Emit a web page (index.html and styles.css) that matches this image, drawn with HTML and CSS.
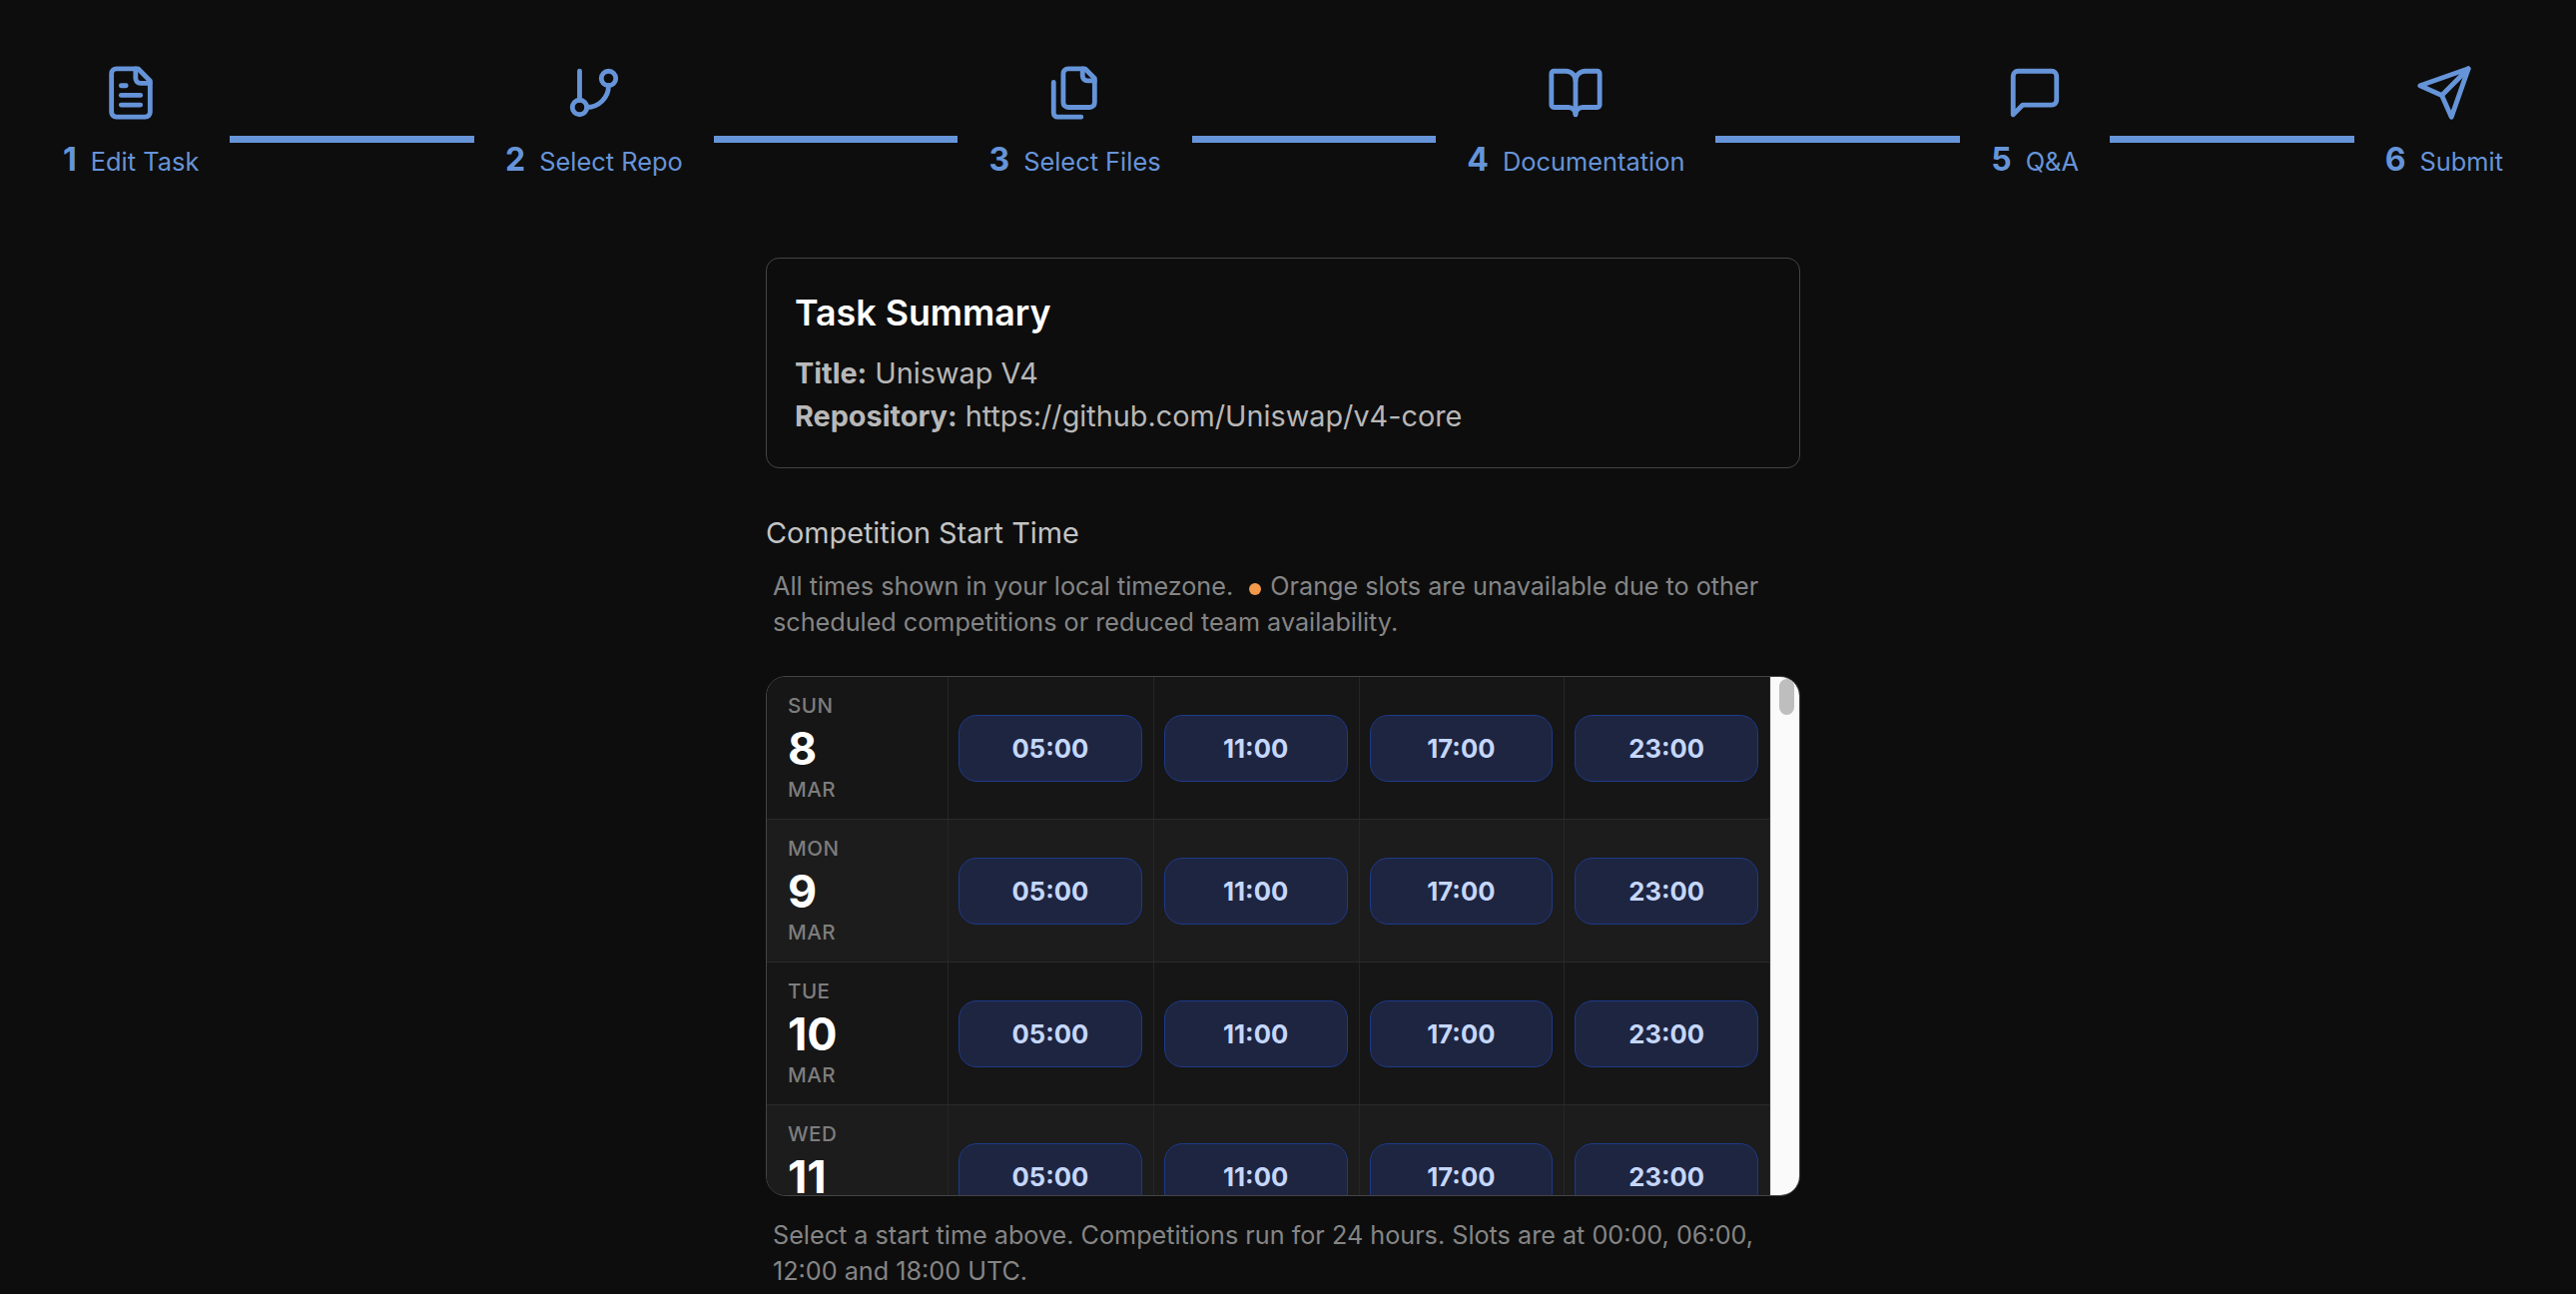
FILE: index.html
```html
<!DOCTYPE html>
<html lang="en">
<head>
  <meta charset="UTF-8">
  <meta name="viewport" content="width=device-width, initial-scale=1.0">
  <title>Task Setup</title>
  <link rel="stylesheet" href="styles.css">
</head>
<body>
  <nav class="stepper">
    <div class="step">
      <svg class="step-icon" viewBox="0 0 24 24"><path d="M15 2H6a2 2 0 0 0-2 2v16a2 2 0 0 0 2 2h12a2 2 0 0 0 2-2V7Z"/><path d="M14 2v4a2 2 0 0 0 2 2h4"/><path d="M10 9H8"/><path d="M16 13H8"/><path d="M16 17H8"/></svg>
      <div class="step-label"><span class="step-num">1</span><span>Edit Task</span></div>
    </div>
    <div class="step-line"></div>
    <div class="step">
      <svg class="step-icon" viewBox="0 0 24 24"><path d="M6 3v12"/><circle cx="18" cy="6" r="3"/><circle cx="6" cy="18" r="3"/><path d="M18 9a9 9 0 0 1-9 9"/></svg>
      <div class="step-label"><span class="step-num">2</span><span>Select Repo</span></div>
    </div>
    <div class="step-line"></div>
    <div class="step">
      <svg class="step-icon" viewBox="0 0 24 24"><path d="M20 7h-3a2 2 0 0 1-2-2V2"/><path d="M9 18a2 2 0 0 1-2-2V4a2 2 0 0 1 2-2h7l4 4v10a2 2 0 0 1-2 2Z"/><path d="M3 7.6v12.8A1.6 1.6 0 0 0 4.6 22h9.8"/></svg>
      <div class="step-label"><span class="step-num">3</span><span>Select Files</span></div>
    </div>
    <div class="step-line"></div>
    <div class="step">
      <svg class="step-icon" viewBox="0 0 24 24"><path d="M12 7v14"/><path d="M3 18a1 1 0 0 1-1-1V4a1 1 0 0 1 1-1h5a4 4 0 0 1 4 4 4 4 0 0 1 4-4h5a1 1 0 0 1 1 1v13a1 1 0 0 1-1 1h-6a3 3 0 0 0-3 3 3 3 0 0 0-3-3z"/></svg>
      <div class="step-label"><span class="step-num">4</span><span>Documentation</span></div>
    </div>
    <div class="step-line"></div>
    <div class="step">
      <svg class="step-icon" viewBox="0 0 24 24"><path d="M21 15a2 2 0 0 1-2 2H7l-4 4V5a2 2 0 0 1 2-2h14a2 2 0 0 1 2 2z"/></svg>
      <div class="step-label"><span class="step-num">5</span><span>Q&amp;A</span></div>
    </div>
    <div class="step-line"></div>
    <div class="step">
      <svg class="step-icon" viewBox="0 0 24 24"><path d="m22 2-7 20-4-9-9-4Z"/><path d="M22 2 11 13"/></svg>
      <div class="step-label"><span class="step-num">6</span><span>Submit</span></div>
    </div>
  </nav>

  <main class="content">
    <section class="summary">
      <h2>Task Summary</h2>
      <p><strong>Title:</strong> Uniswap V4</p>
      <p><strong>Repository:</strong> https://github.com/Uniswap/v4-core</p>
    </section>

    <h3 class="field-title">Competition Start Time</h3>
    <p class="hint hint-top">All times shown in your local timezone. <span class="dot"></span>Orange slots are unavailable due to other scheduled competitions or reduced team availability.</p>

    <div class="calendar">
      <div class="calendar-rows">
        <div class="day-row">
          <div class="day-cell">
            <span class="day-name">SUN</span>
            <span class="day-number">8</span>
            <span class="day-month">MAR</span>
          </div>
          <div class="slot-cell"><button class="slot">05:00</button></div>
          <div class="slot-cell"><button class="slot">11:00</button></div>
          <div class="slot-cell"><button class="slot">17:00</button></div>
          <div class="slot-cell"><button class="slot">23:00</button></div>
        </div>
        <div class="day-row">
          <div class="day-cell">
            <span class="day-name">MON</span>
            <span class="day-number">9</span>
            <span class="day-month">MAR</span>
          </div>
          <div class="slot-cell"><button class="slot">05:00</button></div>
          <div class="slot-cell"><button class="slot">11:00</button></div>
          <div class="slot-cell"><button class="slot">17:00</button></div>
          <div class="slot-cell"><button class="slot">23:00</button></div>
        </div>
        <div class="day-row">
          <div class="day-cell">
            <span class="day-name">TUE</span>
            <span class="day-number">10</span>
            <span class="day-month">MAR</span>
          </div>
          <div class="slot-cell"><button class="slot">05:00</button></div>
          <div class="slot-cell"><button class="slot">11:00</button></div>
          <div class="slot-cell"><button class="slot">17:00</button></div>
          <div class="slot-cell"><button class="slot">23:00</button></div>
        </div>
        <div class="day-row">
          <div class="day-cell">
            <span class="day-name">WED</span>
            <span class="day-number">11</span>
            <span class="day-month">MAR</span>
          </div>
          <div class="slot-cell"><button class="slot">05:00</button></div>
          <div class="slot-cell"><button class="slot">11:00</button></div>
          <div class="slot-cell"><button class="slot">17:00</button></div>
          <div class="slot-cell"><button class="slot">23:00</button></div>
        </div>
      </div>
      <div class="scrollbar"><div class="scrollbar-thumb"></div></div>
    </div>

    <p class="hint hint-bottom">Select a start time above. Competitions run for 24 hours. Slots are at 00:00, 06:00, 12:00 and 18:00 UTC.</p>
  </main>
</body>
</html>
```

FILE: styles.css
```css
* {
  box-sizing: border-box;
}
html, body {
  height: 100%;
  overflow: hidden;
}
body {
  font-family: Inter, "Noto Sans", sans-serif;
  margin: 0;
  padding: 64px 10px 0 0;
  background-color: #0d0d0d;
  color: #b8b8b8;
}
.stepper {
  display: flex;
  align-items: flex-start;
  padding: 0 47px;
  color: #6694d9;
}
.step {
  display: flex;
  flex-direction: column;
  align-items: center;
  padding: 0 16px;
}
.step-icon {
  width: 58px;
  height: 58px;
  fill: none;
  stroke: currentColor;
  stroke-width: 2;
  stroke-linecap: round;
  stroke-linejoin: round;
}
.step-label {
  display: flex;
  align-items: baseline;
  gap: 14px;
  margin-top: 20px;
  font-size: 25.4px;
  line-height: 36px;
  white-space: nowrap;
}
.step-num {
  font-size: 32px;
  font-weight: 700;
}
.step-line {
  flex: 1;
  height: 7px;
  margin: 72px 15px 0;
  background-color: #6694d9;
}
.content {
  width: 1036px;
  margin: 78px auto 0;
}
.summary {
  height: 211px;
  padding: 32px 29px 32px 28px;
  border: 1px solid #444;
  border-radius: 13px;
}
.summary h2 {
  margin: 0 0 17px;
  font-size: 35.8px;
  line-height: 44px;
  font-weight: 600;
  color: #fff;
}
.summary p {
  margin: 0;
  font-size: 28.8px;
  line-height: 43px;
}
.summary strong {
  font-weight: 700;
}
.field-title {
  margin: 47px 0 0;
  font-size: 28.8px;
  line-height: 36px;
  font-weight: 400;
  color: #c4c4c4;
}
.hint {
  margin: 0;
  padding-left: 7px;
  font-size: 25.2px;
  line-height: 36px;
  color: #858585;
}
.hint-top {
  margin-top: 17px;
}
.hint-bottom {
  margin-top: 21px;
}
.dot {
  display: inline-block;
  width: 12px;
  height: 12px;
  margin: 0 9px;
  border-radius: 50%;
  background-color: #f2994a;
}
.calendar {
  display: flex;
  height: 521px;
  margin-top: 36px;
  border: 1px solid #444;
  border-radius: 20px;
  overflow: hidden;
}
.calendar-rows {
  flex: 1;
  overflow: hidden;
}
.scrollbar {
  width: 29px;
  padding: 2px 5px 0 8px;
  background-color: #fafafa;
  border-left: 1px solid #e6e6e6;
}
.scrollbar-thumb {
  height: 36px;
  border-radius: 8px;
  background-color: #bebebe;
}
.day-row {
  display: grid;
  grid-template-columns: 182px repeat(4, 1fr);
  height: 143px;
  background-color: #161616;
  border-bottom: 1px solid #2a2a2a;
}
.day-row:nth-child(even) {
  background-color: #1c1c1c;
}
.day-cell {
  display: flex;
  flex-direction: column;
  justify-content: center;
  padding-left: 21px;
  border-right: 1px solid #262626;
}
.day-name, .day-month {
  font-size: 20.5px;
  line-height: 26px;
  font-weight: 500;
  letter-spacing: 0.5px;
  color: #7d7d7d;
}
.day-number {
  padding-top: 2px;
  font-size: 44.8px;
  line-height: 56px;
  font-weight: 700;
  color: #fff;
}
.slot-cell {
  display: flex;
  align-items: center;
  padding: 0 11px 0 10px;
  border-right: 1px solid #262626;
}
.slot {
  width: 100%;
  height: 67px;
  padding: 0;
  font-family: inherit;
  font-size: 25.6px;
  font-weight: 700;
  color: #c5d7fb;
  background-color: #1e2541;
  border: 1.5px solid #1e3a8a;
  border-radius: 18px;
}
```
